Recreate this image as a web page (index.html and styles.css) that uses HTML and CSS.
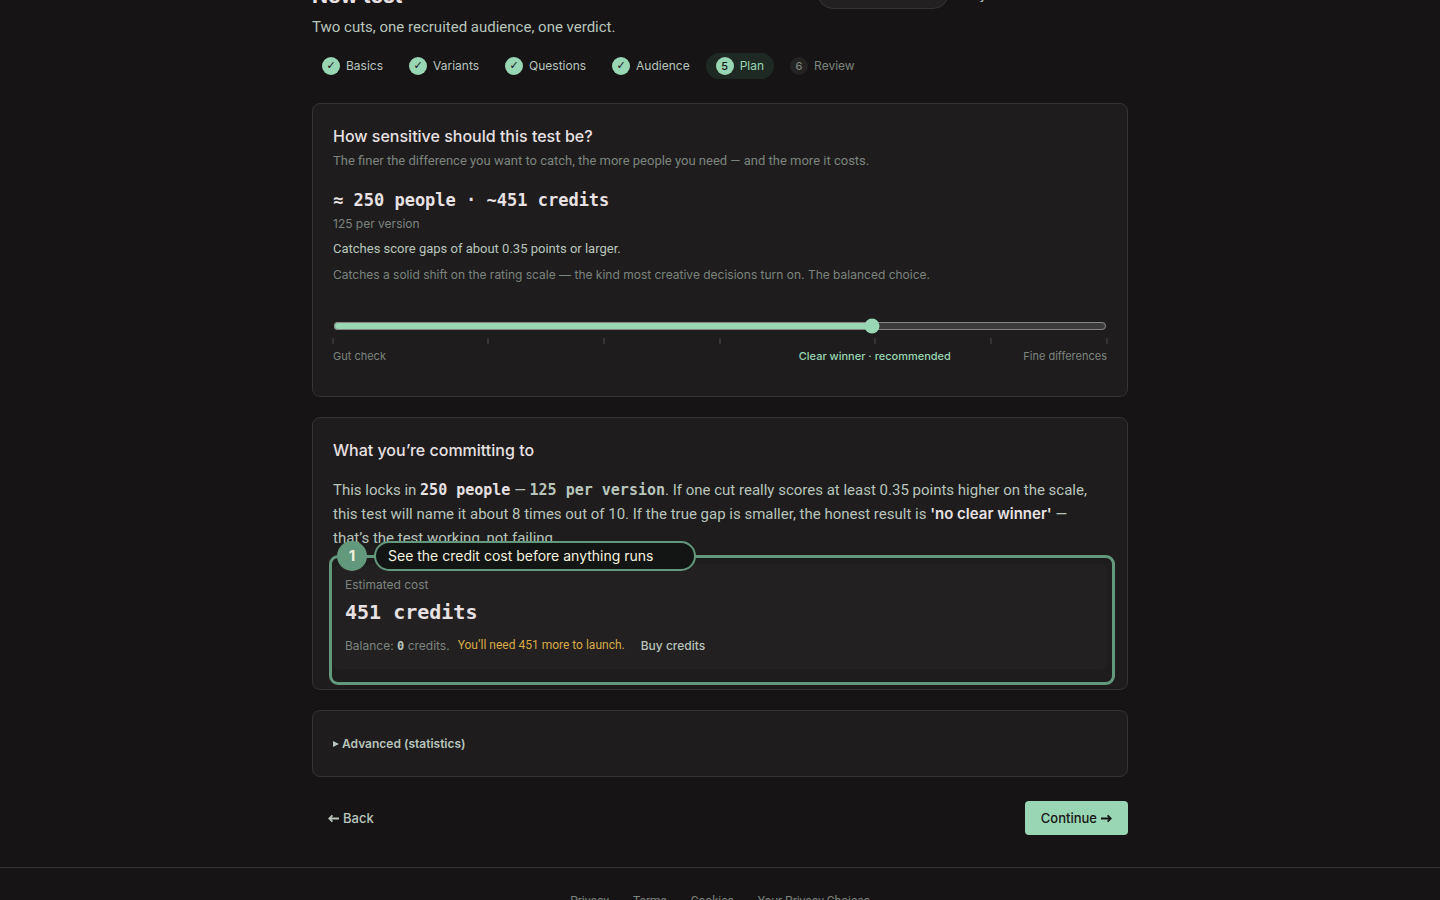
FILE: index.html
```html
<!DOCTYPE html>
<html lang="en">
<head>
<meta charset="utf-8">
<title>New test</title>
<link rel="stylesheet" href="styles.css">
</head>
<body>
<main class="page">
  <header class="head">
    <div class="head-row">
      <h1 class="title">New test</h1>
      <div class="head-actions">
        <span class="balance-pill"></span>
        <a class="head-link" href="#">Buy credits</a>
      </div>
    </div>
    <p class="lede">Two cuts, one recruited audience, one verdict.</p>
  </header>

  <ol class="steps">
    <li class="step"><span class="dot check">✓</span>Basics</li>
    <li class="step"><span class="dot check">✓</span>Variants</li>
    <li class="step"><span class="dot check">✓</span>Questions</li>
    <li class="step"><span class="dot check">✓</span>Audience</li>
    <li class="step step-current" aria-current="step"><span class="dot">5</span>Plan</li>
    <li class="step step-next"><span class="dot">6</span>Review</li>
  </ol>

  <section class="card">
    <h2 class="card-title"><label for="sensitivity">How sensitive should this test be?</label></h2>
    <p class="hint">The finer the difference you want to catch, the more people you need — and the more it costs.</p>
    <p class="estimate">≈ 250 people · ~451 credits</p>
    <p class="small">125 per version</p>
    <p class="catches">Catches score gaps of about 0.35 points or larger.</p>
    <p class="small">Catches a solid shift on the rating scale — the kind most creative decisions turn on. The balanced choice.</p>
    <div class="slider">
      <input class="range" id="sensitivity" type="range" min="0" max="100" value="70">
      <div class="ticks"><i></i><i></i><i></i><i></i><i></i><i></i></div>
      <div class="scale">
        <span class="scale-start">Gut check</span>
        <span class="scale-mid">Clear winner · recommended</span>
        <span class="scale-end">Fine differences</span>
      </div>
    </div>
  </section>

  <section class="card">
    <h2 class="card-title">What you’re committing to</h2>
    <p class="commit">This locks in <strong class="mono strong">250 people</strong> — <strong class="mono">125 per version</strong>. If one cut really scores at least 0.35 points higher on the scale, this test will name it about 8 times out of 10. If the true gap is smaller, the honest result is <strong class="strong verdict">'no clear winner'</strong> — that’s&nbsp;the test working, not failing.</p>
    <div class="cost">
      <p class="small">Estimated cost</p>
      <p class="cost-value">451 credits</p>
      <div class="cost-row">
        <span class="balance">Balance: <b class="mono">0</b> credits.</span>
        <span class="warn">You’ll need 451 more to launch.</span>
        <a class="buy" href="#">Buy credits</a>
      </div>
      <div class="callout">
        <div class="callout-head">
          <span class="callout-num">1</span>
          <span class="callout-label">See the credit cost before anything runs</span>
        </div>
      </div>
    </div>
  </section>

  <section class="card card-advanced">
    <button class="disclosure" type="button"><svg class="caret" viewBox="0 0 6 6" aria-hidden="true"><path d="M0 0L6 3L0 6Z"/></svg>Advanced (statistics)</button>
  </section>

  <nav class="actions">
    <button class="btn" type="button"><svg class="arrow" viewBox="0 0 10 8" aria-hidden="true"><path d="M10 4H1.5M4 1.2L1.2 4L4 6.8"/></svg>Back</button>
    <button class="btn btn-primary" type="button">Continue<svg class="arrow" viewBox="0 0 10 8" aria-hidden="true"><path d="M0 4H8.5M6 1.2L8.8 4L6 6.8"/></svg></button>
  </nav>
</main>
<footer class="footer">
  <a href="#">Privacy</a><a href="#">Terms</a><a href="#">Cookies</a><a href="#">Your Privacy Choices</a>
</footer>
</body>
</html>
```

FILE: styles.css
```css
:root {
  color-scheme: dark;
  --bg: #161415;
  --card: #1e1c1d;
  --raised: #222021;
  --line: #353334;
  --text: #e8e1e3;
  --soft: #b9c5bc;
  --muted: #7c847e;
  --mint: #99d6b3;
  --ring: #62997c;
  --ui: Inter, "Liberation Sans", sans-serif;
  --prose: Roboto, "Liberation Sans", sans-serif;
}
* { box-sizing: border-box; }
html, body { height: 100%; }
body {
  margin: 0;
  overflow: hidden;
  background: var(--bg);
  color: var(--soft);
  font-family: var(--ui);
  font-size: 14px;
}
h1, h2, p, ol { margin: 0; padding: 0; font-weight: 400; }
a { color: inherit; text-decoration: none; }
button { font: inherit; color: inherit; background: none; border: 0; }

.page { max-width: 864px; margin: 0 auto; padding: 0 24px; }
/* the page sits scrolled past most of its heading */
.head { margin-top: -23px; }
.head-row { display: flex; justify-content: space-between; height: 32px; }
.title { font-size: 21px; line-height: 37px; font-weight: 700; color: var(--text); }
.head-actions { display: flex; gap: 16px; margin-right: 99px; }
.balance-pill { width: 132px; height: 32px; border: 1px solid var(--line); border-radius: 16px; background: var(--raised); }
.head-link { font-size: 12px; line-height: 38px; font-weight: 500; }
.lede { margin-top: 8px; font-family: var(--prose); font-size: 15px; line-height: 20px; }

.steps { display: flex; gap: 6px; margin: 16px 0 24px; list-style: none; }
.step { display: flex; align-items: center; gap: 6px; padding: 4px 10px; border-radius: 13px; font-size: 12px; line-height: 18px; }
.dot { width: 18px; height: 18px; border-radius: 50%; background: var(--mint); color: var(--bg); font-size: 11px; font-weight: 500; text-align: center; }
.check { font-family: "DejaVu Sans", sans-serif; font-weight: 400; }
.step-current { background: #1f2924; color: var(--mint); }
.step-next { color: var(--muted); }
.step-next .dot { background: #242223; color: var(--muted); }

.card { margin-bottom: 20px; padding: 20px; border: 1px solid var(--line); border-radius: 8px; background: var(--card); }
.card-title { font-size: 16px; line-height: 24px; font-weight: 500; color: var(--text); }
.hint { margin-top: 4px; font-family: var(--prose); font-size: 13px; line-height: 18px; color: var(--muted); }
.small { font-size: 12px; line-height: 18px; color: var(--muted); }
.mono, .estimate, .cost-value { font-family: "DejaVu Sans Mono", monospace; font-weight: 700; }
.estimate { margin: 18px 0 3px; font-size: 17px; line-height: 24px; color: var(--text); }
.catches { margin: 6px 0 7px; font-family: var(--prose); font-size: 13px; line-height: 20px; }

.slider { margin-top: 34px; padding-bottom: 12px; }
.range { display: block; width: 100%; height: 16px; margin: 0; accent-color: var(--mint); }
.ticks { display: grid; grid-template-columns: 20fr 15fr 15fr 20fr 15fr 15fr; height: 6px; margin: 4px -1px; border-right: 2px solid var(--line); }
.ticks i { border-left: 2px solid var(--line); }
.scale { display: grid; grid-template-columns: minmax(0, 40fr) minmax(0, 60fr); font-size: 11px; line-height: 16px; color: var(--muted); }
.scale span { grid-row: 1; }
.scale-start { grid-column: 1; }
.scale-mid { grid-column: 2; justify-self: center; color: var(--mint); font-weight: 500; }
.scale-end { grid-column: 2; justify-self: end; }

.commit { margin: 16px 0 14px; font-family: var(--prose); font-size: 15px; line-height: 24px; }
.strong { color: var(--text); }
.verdict { font-family: var(--ui); font-weight: 600; }
.cost { position: relative; padding: 12px; border-radius: 6px; background: var(--raised); }
.cost-value { margin: 4px 0 7px; font-size: 20px; line-height: 28px; color: var(--text); }
.cost-row { display: flex; align-items: center; height: 24px; gap: 8px; font-size: 12px; }
.balance { color: var(--muted); }
.cost-row .mono { color: var(--soft); }
.warn { font-family: var(--prose); color: #d9ab45; }
.buy { margin-left: 8px; font-weight: 500; }

.callout { position: absolute; inset: -9px -8px -16px -4px; border: 3px solid var(--ring); border-radius: 9px; }
.callout-head { position: absolute; top: -17px; left: 5px; display: flex; gap: 7px; }
.callout-num { width: 30px; height: 30px; border-radius: 50%; background: var(--ring); color: #efeedd; font-size: 15px; line-height: 30px; font-weight: 700; text-align: center; }
.callout-label { min-width: 322px; padding: 0 12px; border: 2px solid var(--ring); border-radius: 15px; background: #131514; color: #f5f3df; font-size: 14px; line-height: 26px; }

.card-advanced { margin-bottom: 24px; padding: 24px 20px 23px; }
.disclosure { display: flex; align-items: center; gap: 3px; padding: 0; font-size: 12px; line-height: 18px; font-weight: 600; }
.caret { width: 6px; height: 6px; fill: currentColor; }
.actions { display: flex; justify-content: space-between; margin-bottom: 32px; }
.btn { display: flex; align-items: center; gap: 4px; padding: 8px 16px; border-radius: 4px; font-size: 13px; line-height: 18px; font-weight: 500; }
.btn-primary { background: var(--mint); color: var(--bg); }
.arrow { width: 11px; height: 9px; fill: none; stroke: currentColor; stroke-width: 1.6; }

.footer { display: flex; justify-content: center; gap: 24px; padding: 24px; border-top: 1px solid var(--line); font-family: var(--prose); font-size: 12px; line-height: 18px; color: var(--muted); }
```
